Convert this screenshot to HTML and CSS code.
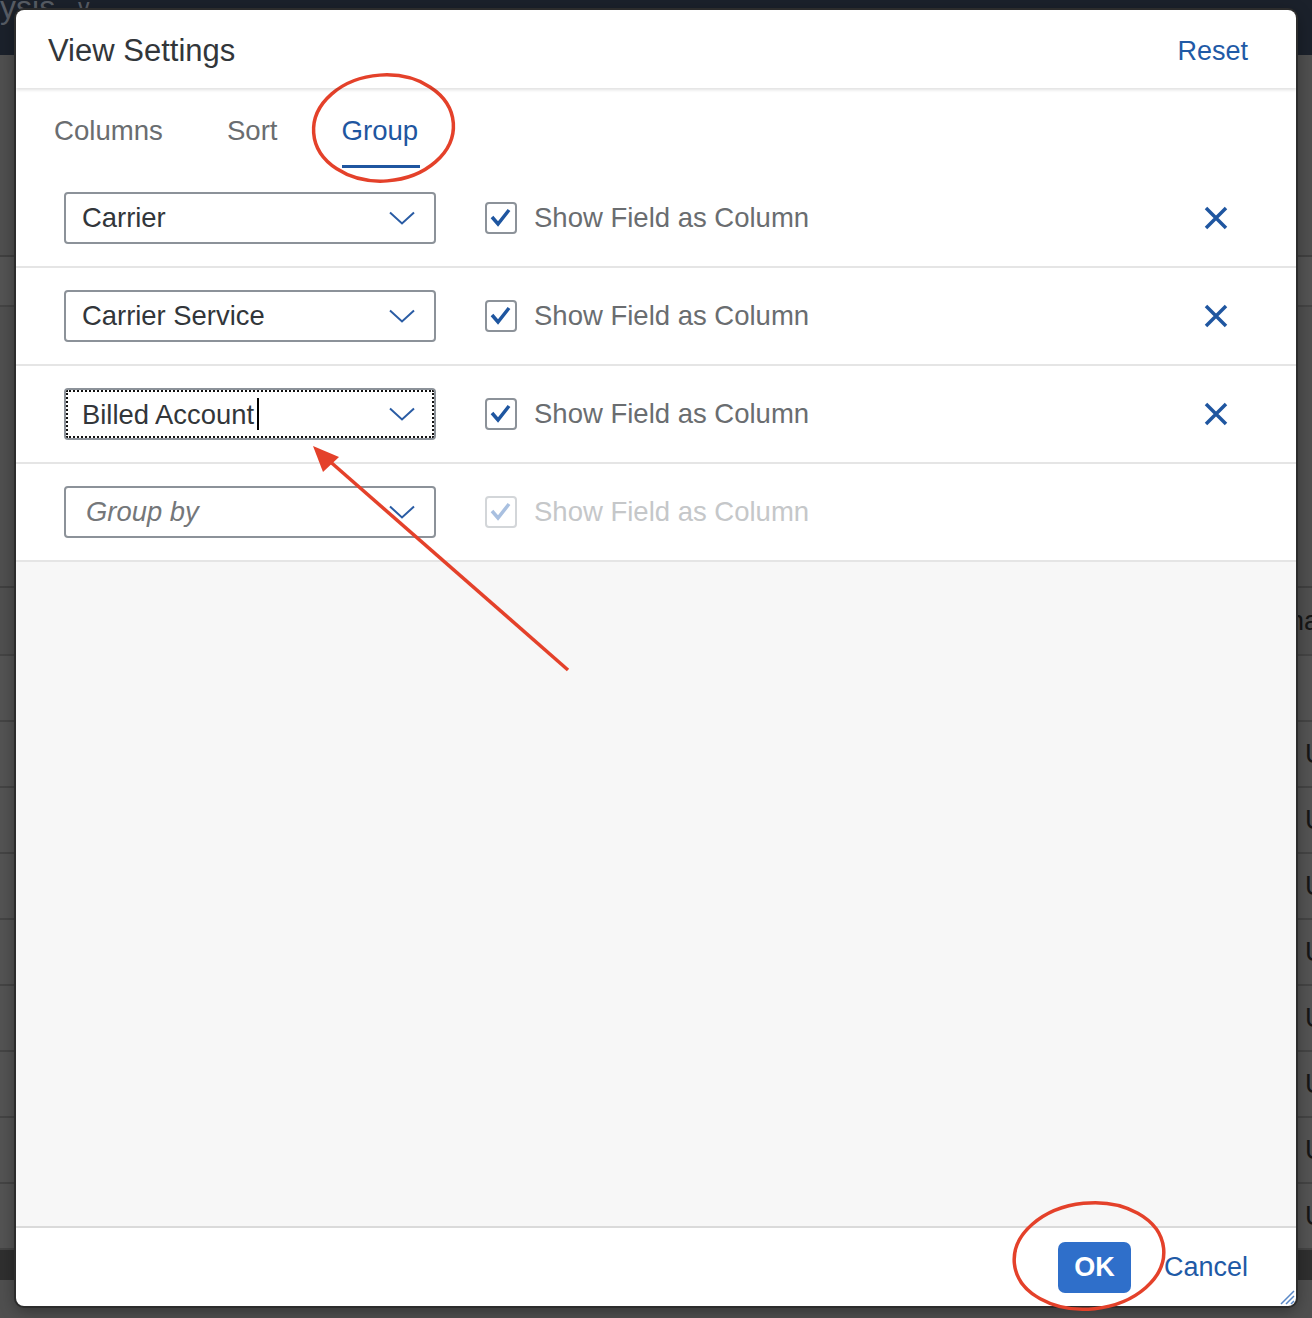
FILE: index.html
```html
<!DOCTYPE html>
<html lang="en">
<head>
  <meta charset="UTF-8">
  <title>View Settings</title>
  <link rel="stylesheet" href="styles.css">
</head>
<body>
  <!-- pagina por tras do dialogo -->
  <div class="backdrop">
    <div class="topbar"><span class="app-title">Analysis</span><span class="app-caret">&#8744;</span></div>
    <div class="bg-gap" style="height: 200px"></div>
    <div class="bg-row" style="height: 48px"></div>
    <div class="bg-gap" style="height: 279px"></div>
    <div class="bg-row head" style="height: 66px"><span class="bg-cell">name</span></div>
    <div class="bg-row"></div>
    <div class="bg-row"><span class="bg-cell">US</span></div>
    <div class="bg-row"><span class="bg-cell">US</span></div>
    <div class="bg-row"><span class="bg-cell">US</span></div>
    <div class="bg-row"><span class="bg-cell">US</span></div>
    <div class="bg-row"><span class="bg-cell">US</span></div>
    <div class="bg-row"><span class="bg-cell">US</span></div>
    <div class="bg-row"><span class="bg-cell">US</span></div>
    <div class="bg-row"><span class="bg-cell">US</span></div>
    <div class="bg-band"></div>
  </div>

  <div class="dialog">
    <div class="dlg-header">
      <span class="dlg-title">View Settings</span>
      <a class="link">Reset</a>
    </div>
    <div class="tabs">
      <span class="tab">Columns</span>
      <span class="tab">Sort</span>
      <span class="tab active">Group</span>
    </div>

    <div class="group-list">
      <div class="group-row">
        <div class="select"><span class="value">Carrier</span>
          <svg class="chev" width="26" height="14" viewBox="0 0 26 14"><polyline points="1,1.5 13,12.5 25,1.5"/></svg>
        </div>
        <span class="check"><svg width="28" height="28" viewBox="0 0 28 28"><polyline points="5,13 11,20 22,6"/></svg></span>
        <span class="check-label">Show Field as Column</span>
        <span class="spacer"></span>
        <svg class="remove" width="24" height="24" viewBox="0 0 24 24"><path d="M2 2 L22 22 M22 2 L2 22"/></svg>
      </div>
      <div class="group-row">
        <div class="select"><span class="value">Carrier Service</span>
          <svg class="chev" width="26" height="14" viewBox="0 0 26 14"><polyline points="1,1.5 13,12.5 25,1.5"/></svg>
        </div>
        <span class="check"><svg width="28" height="28" viewBox="0 0 28 28"><polyline points="5,13 11,20 22,6"/></svg></span>
        <span class="check-label">Show Field as Column</span>
        <span class="spacer"></span>
        <svg class="remove" width="24" height="24" viewBox="0 0 24 24"><path d="M2 2 L22 22 M22 2 L2 22"/></svg>
      </div>
      <div class="group-row">
        <div class="select focused"><span class="value">Billed Account<span class="caret"></span></span>
          <svg class="chev" width="26" height="14" viewBox="0 0 26 14"><polyline points="1,1.5 13,12.5 25,1.5"/></svg>
        </div>
        <span class="check"><svg width="28" height="28" viewBox="0 0 28 28"><polyline points="5,13 11,20 22,6"/></svg></span>
        <span class="check-label">Show Field as Column</span>
        <span class="spacer"></span>
        <svg class="remove" width="24" height="24" viewBox="0 0 24 24"><path d="M2 2 L22 22 M22 2 L2 22"/></svg>
      </div>
      <div class="group-row">
        <div class="select"><span class="value placeholder">Group by</span>
          <svg class="chev" width="26" height="14" viewBox="0 0 26 14"><polyline points="1,1.5 13,12.5 25,1.5"/></svg>
        </div>
        <span class="check disabled"><svg width="28" height="28" viewBox="0 0 28 28"><polyline points="5,13 11,20 22,6"/></svg></span>
        <span class="check-label disabled">Show Field as Column</span>
      </div>
    </div>

    <div class="dlg-content"></div>

    <div class="dlg-footer">
      <button class="btn-ok">OK</button>
      <a class="link">Cancel</a>
    </div>
    <svg class="resize" width="16" height="16" viewBox="0 0 16 16"><path d="M15 2 L2 15 M15 7 L7 15 M15 12 L12 15"/></svg>
  </div>

  <!-- marcacoes em vermelho -->
  <svg class="marks" width="1312" height="1318" viewBox="0 0 1312 1318">
    <ellipse cx="383.5" cy="128" rx="70" ry="53" transform="rotate(-4 383.5 128)"/>
    <ellipse cx="1089" cy="1256" rx="75" ry="53" transform="rotate(-6 1089 1256)"/>
    <line x1="568" y1="670" x2="326" y2="458"/>
    <polygon points="313,446 339,457 323,472"/>
  </svg>
</body>
</html>
```

FILE: styles.css
```css
body {
  margin: 0;
  width: 1312px;
  height: 1318px;
  overflow: hidden;
  position: relative;
  font-family: "Liberation Sans", Arial, sans-serif;
  background-color: #4f4f4f;
}
.backdrop {
  display: flex;
  flex-direction: column;
}
.topbar {
  height: 55px;
  background-color: #1b212b;
  overflow: hidden;
  display: flex;
  align-items: flex-start;
}
.app-title {
  margin-left: -64px;
  margin-top: -11px;
  font-size: 32px;
  color: #575c64;
}
.app-caret {
  margin-left: 20px;
  margin-top: -6px;
  font-size: 24px;
  color: #575c64;
}
.bg-gap {
  border-bottom: 2px solid #404040;
}
.bg-row {
  height: 64px;
  border-bottom: 2px solid #444;
  display: flex;
  align-items: center;
  background-color: #535353;
}
.bg-row.head {
  background-color: #4f4f4f;
}
.bg-cell {
  margin-left: 1305px;
  font-size: 27px;
  color: #161616;
  white-space: nowrap;
}
.bg-row.head .bg-cell {
  margin-left: 1289px;
}
.bg-band {
  height: 30px;
  background-color: #2f2f2f;
}

/* dialogo */
.dialog {
  position: absolute;
  left: 16px;
  top: 10px;
  width: 1280px;
  height: 1296px;
  background: #fff;
  border-radius: 8px;
  box-shadow: 0 0 0 2px #2c2c2c, 0 4px 16px rgba(0, 0, 0, 0.4);
  display: flex;
  flex-direction: column;
  overflow: hidden;
}
.dlg-header {
  height: 78px;
  flex: none;
  box-sizing: border-box;
  padding: 4px 48px 0 32px;
  display: flex;
  align-items: center;
  justify-content: space-between;
  position: relative;
  z-index: 1;
  box-shadow: 0 2px 3px rgba(0, 0, 0, 0.12);
}
.dlg-title {
  font-size: 31px;
  color: #32363a;
}
.link {
  font-size: 27px;
  color: #1f5aa6;
  cursor: pointer;
}
.tabs {
  height: 82px;
  flex: none;
  box-sizing: border-box;
  padding: 3px 0 0 38px;
  display: flex;
  gap: 64px;
}
.tab {
  position: relative;
  display: flex;
  align-items: center;
  font-size: 27.6px;
  color: #6a6d70;
}
.tab.active {
  color: #1f56a0;
}
.tab.active::after {
  content: "";
  position: absolute;
  left: 0;
  right: -2px;
  bottom: 2px;
  height: 3px;
  background-color: #1f56a0;
}
.group-row {
  height: 96px;
  border-bottom: 2px solid #e5e5e5;
  padding: 0 68px 0 48px;
  display: flex;
  align-items: center;
}
.select {
  width: 372px;
  height: 52px;
  box-sizing: border-box;
  border: 2px solid #8c9299;
  border-radius: 4px;
  padding-left: 16px;
  display: flex;
  align-items: center;
  justify-content: space-between;
}
.select.focused {
  outline: 2px dotted #111;
  outline-offset: -4px;
}
.value {
  font-size: 27.4px;
  color: #32363a;
}
.value.placeholder {
  font-style: italic;
  color: #74777a;
  padding-left: 4px;
}
.caret {
  display: inline-block;
  width: 2px;
  height: 32px;
  margin-left: 3px;
  background-color: #000;
  vertical-align: -6px;
}
.chev {
  margin-right: 19px;
  fill: none;
  stroke: #2a5ca4;
  stroke-width: 2;
}
.check {
  margin-left: 49px;
  width: 32px;
  height: 32px;
  box-sizing: border-box;
  border: 2px solid #8c9299;
  border-radius: 4px;
  display: flex;
  align-items: center;
  justify-content: center;
}
.check svg {
  fill: none;
  stroke: #1f56a0;
  stroke-width: 3.5;
}
.check.disabled {
  border-color: #d3d6d9;
}
.check.disabled svg {
  stroke: #a9c0e0;
}
.check-label {
  margin-left: 17px;
  font-size: 27.5px;
  color: #6a6d70;
}
.check-label.disabled {
  color: #c5c7c9;
}
.spacer {
  flex: 1;
}
.remove {
  fill: none;
  stroke: #1f56a0;
  stroke-width: 3.5;
}
.dlg-content {
  flex: 1;
  background-color: #f7f7f7;
}
.dlg-footer {
  height: 78px;
  flex: none;
  border-top: 2px solid #dadada;
  padding-right: 48px;
  display: flex;
  align-items: center;
  justify-content: flex-end;
  gap: 33px;
}
.btn-ok {
  width: 73px;
  height: 51px;
  border: none;
  border-radius: 7px;
  background-color: #2f6fca;
  color: #fff;
  font-family: "Liberation Sans", Arial, sans-serif;
  font-size: 27px;
  font-weight: bold;
}
.resize {
  position: absolute;
  right: 1px;
  bottom: 1px;
  fill: none;
  stroke: #5a88c6;
  stroke-width: 1.5;
}
.marks {
  position: absolute;
  left: 0;
  top: 0;
  pointer-events: none;
}
.marks ellipse,
.marks line {
  fill: none;
  stroke: #e4412a;
  stroke-width: 3.5;
}
.marks polygon {
  fill: #e4412a;
}
```
